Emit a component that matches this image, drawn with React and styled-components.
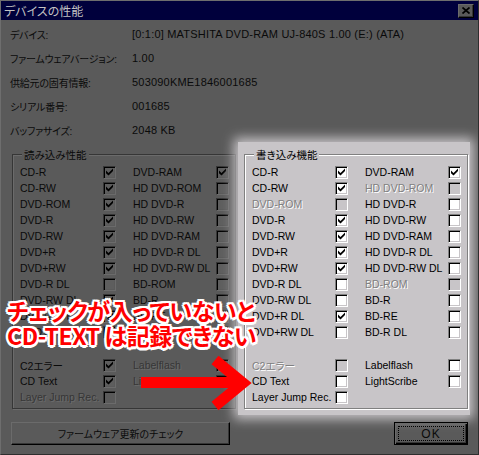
import styled, { createGlobalStyle } from 'styled-components'

const PAL = {
	dim: {
		bg: '#5a5a5a',
		text: '#0a0a0a',
		shade: '#363636',
		hi: '#6b6b6b',
		dark: '#000',
		fill: '#5e5e5e',
		dis: '#363636',
		disShadow: '#6b6b6b',
	},
	lit: {
		bg: '#c8c5c8',
		text: '#000',
		shade: '#808080',
		hi: '#fff',
		dark: '#000',
		fill: '#fff',
		dis: '#808080',
		disShadow: '#fff',
	},
}
const tone = (p) => (p.$lit ? PAL.lit : PAL.dim)

const GlobalStyle = createGlobalStyle`
	html, body {
		margin: 0;
		background: #5a5a5a;
	}
	body {
		font-family: "Liberation Sans", "Noto Sans CJK JP", sans-serif;
		font-size: 11px;
		font-feature-settings: "palt";
		color: #0a0a0a;
	}
`

const Dialog = styled.div`
	position: relative;
	width: 479px;
	height: 455px;
	box-sizing: border-box;
	display: flex;
	flex-direction: column;
	background: #5a5a5a;
	border-top: 1px solid #6e6e6e;
	border-left: 1px solid #6e6e6e;
	border-right: 1px solid #2e2e2e;
	border-bottom: 1px solid #2e2e2e;
	overflow: hidden;
`

const TitleBar = styled.div`
	height: 19px;
	flex-shrink: 0;
	display: flex;
	align-items: center;
	justify-content: space-between;
	padding: 0 4px 0 3px;
	background: #00003c;
`

const TitleText = styled.span`
	font-family: "Noto Sans CJK JP", sans-serif;
	font-size: 12px;
	color: #c2c2c2;
`

const CloseButton = styled.span`
	width: 16px;
	height: 14px;
	box-sizing: border-box;
	display: flex;
	align-items: center;
	justify-content: center;
	background: #5a5a5a;
	border: 1px solid;
	border-color: #6b6b6b #000 #000 #6b6b6b;
	box-shadow: inset -1px -1px 0 #363636;
`

const InfoList = styled.div`
	padding: 2px 0 0 9px;
`

const InfoRow = styled.div`
	display: grid;
	grid-template-columns: 122px 1fr;
	align-items: center;
	height: 24px;
	white-space: nowrap;
	letter-spacing: 0.2px;
`

const InfoLabel = styled.span`
	font-size: 10px;
	letter-spacing: -0.2px;
`

const GroupRow = styled.div`
	display: flex;
	gap: 8px;
	margin-top: 6px;
	padding-left: 11px;
	align-items: flex-start;
`

const Spotlight = styled.div`
	margin: -6px -2px -6px -6px;
	padding: 6px 2px 6px 6px;
	background: ${PAL.lit.bg};
	box-shadow: 0 0 11px 4px ${PAL.lit.bg};
`

const Group = styled.fieldset`
	width: 224px;
	box-sizing: border-box;
	margin: 0;
	padding: 3px 0 3px 7px;
	min-inline-size: 0;
	border: 1px solid ${(p) => tone(p).shade};
	box-shadow: inset 1px 1px 0 ${(p) => tone(p).hi}, 1px 1px 0 ${(p) => tone(p).hi};
	color: ${(p) => tone(p).text};
`

const Legend = styled.legend`
	margin-left: 2px;
	padding: 0 2px;
	line-height: 13px;
	background: ${(p) => tone(p).bg};
	font-family: "Noto Sans CJK JP", sans-serif;
	font-size: 10.5px;
`

const ItemGrid = styled.div`
	display: grid;
	grid-template-columns: repeat(2, 96px);
	grid-auto-rows: 16px;
	column-gap: 17px;
	align-items: center;
	margin-top: ${(p) => (p.$extra ? '17px' : '0')};
`

const Item = styled.div`
	display: flex;
	align-items: center;
`

const ItemLabel = styled.span`
	width: 83px;
	white-space: nowrap;
	font-size: 10.5px;
	color: ${(p) => (p.$disabled ? tone(p).dis : tone(p).text)};
	text-shadow: ${(p) => (p.$disabled ? `1px 1px 0 ${tone(p).disShadow}` : 'none')};
`

const Box = styled.span`
	width: 13px;
	height: 13px;
	box-sizing: border-box;
	display: flex;
	align-items: center;
	justify-content: center;
	border: 1px solid;
	border-color: ${(p) => `${tone(p).shade} ${tone(p).hi} ${tone(p).hi} ${tone(p).shade}`};
	box-shadow: inset 1px 1px 0 ${(p) => tone(p).dark}, inset -1px -1px 0 ${(p) => tone(p).bg};
	background: ${(p) => (p.$disabled ? tone(p).bg : tone(p).fill)};
`

const ButtonRow = styled.div`
	display: flex;
	justify-content: space-between;
	margin-top: 13px;
	padding: 0 10px;
`

const Button = styled.div`
	width: ${(p) => p.$width}px;
	height: 23px;
	box-sizing: border-box;
	display: flex;
	align-items: center;
	justify-content: center;
	padding: ${(p) => (p.$default ? '3px' : '0')};
	border: 1px solid;
	border-color: ${(p) => (p.$default ? '#000' : '#6b6b6b #000 #000 #6b6b6b')};
	box-shadow: ${(p) =>
		p.$default
			? 'inset 1px 1px 0 #6b6b6b, inset -1px -1px 0 #000, inset -2px -2px 0 #363636'
			: 'inset -1px -1px 0 #363636'};
	font-family: "Noto Sans CJK JP", sans-serif;
	font-size: 10px;
`

const Focus = styled.span`
	flex: 1;
	align-self: stretch;
	display: flex;
	align-items: center;
	justify-content: center;
	border: 1px dotted #000;
	font-family: "Liberation Sans", sans-serif;
	font-size: 12px;
	letter-spacing: 1px;
`

const Note = styled.div`
	position: absolute;
	left: 6px;
	top: 297px;
	font-family: "Noto Sans CJK JP", sans-serif;
	font-weight: 700;
	font-size: 23px;
	line-height: 25px;
	letter-spacing: -0.4px;
	color: #ff0000;
	white-space: nowrap;
	text-shadow: 2.5px 0 0 #fff, -2.5px 0 0 #fff, 0 2.5px 0 #fff, 0 -2.5px 0 #fff, 1.8px 1.8px 0 #fff,
		-1.8px 1.8px 0 #fff, 1.8px -1.8px 0 #fff, -1.8px -1.8px 0 #fff;
`

const NoteLine = styled.div``

const Arrow = styled.svg`
	position: absolute;
	left: 140px;
	top: 355px;
`

const MEDIA = [
	['CD-R', 'DVD-RAM'],
	['CD-RW', 'HD DVD-ROM'],
	['DVD-ROM', 'HD DVD-R'],
	['DVD-R', 'HD DVD-RW'],
	['DVD-RW', 'HD DVD-RAM'],
	['DVD+R', 'HD DVD-R DL'],
	['DVD+RW', 'HD DVD-RW DL'],
	['DVD-R DL', 'BD-ROM'],
	['DVD-RW DL', 'BD-R'],
	['DVD+R DL', 'BD-RE'],
	['DVD+RW DL', 'BD-R DL'],
].flat()

const EXTRA = ['C2エラー', 'Labelflash', 'CD Text', 'LightScribe', 'Layer Jump Rec.', null]

// x = checked, o = empty, - = disabled (row by row, left then right)
const READ = { media: 'xxxoxoxoxoxoxoooxoxooo', extra: 'x-x--' }
const WRITE = { media: 'xxx--oxoxoxoxoo-ooxooo', extra: '-oooo' }

const INFO = [
	['デバイス:', '[0:1:0] MATSHITA DVD-RAM UJ-840S 1.00 (E:) (ATA)'],
	['ファームウェアバージョン:', '1.00'],
	['供給元の固有情報:', '503090KME1846001685'],
	['シリアル番号:', '001685'],
	['バッファサイズ:', '2048 KB'],
]

function Check() {
	return (
		<svg width="7" height="8" viewBox="0 0 7 8">
			<polygon points="0,2.6 2.5,5 7,0.4 7,3 2.5,7.6 0,5.2" fill="#000" />
		</svg>
	)
}

function Option({ label, state, lit }) {
	if (!label) return <span />
	const disabled = state === '-'
	return (
		<Item>
			<ItemLabel $lit={lit} $disabled={disabled}>
				{label}
			</ItemLabel>
			<Box $lit={lit} $disabled={disabled}>
				{state === 'x' && <Check />}
			</Box>
		</Item>
	)
}

function Panel({ title, data, lit }) {
	return (
		<Group $lit={lit}>
			<Legend $lit={lit}>{title}</Legend>
			<ItemGrid>
				{MEDIA.map((m, i) => (
					<Option key={m} label={m} state={data.media[i]} lit={lit} />
				))}
			</ItemGrid>
			<ItemGrid $extra>
				{EXTRA.map((m, i) => (
					<Option key={i} label={m} state={data.extra[i]} lit={lit} />
				))}
			</ItemGrid>
		</Group>
	)
}

function App() {
	return (
		<>
			<GlobalStyle />
			<Dialog>
				<TitleBar>
					<TitleText>デバイスの性能</TitleText>
					<CloseButton>
						<svg width="8" height="7" viewBox="0 0 8 7">
							<path d="M0.5 0.5 L7.5 6.5 M7.5 0.5 L0.5 6.5" stroke="#000" strokeWidth="1.7" />
						</svg>
					</CloseButton>
				</TitleBar>

				<InfoList>
					{INFO.map(([k, v]) => (
						<InfoRow key={k}>
							<InfoLabel>{k}</InfoLabel>
							<span>{v}</span>
						</InfoRow>
					))}
				</InfoList>

				<GroupRow>
					<Panel title="読み込み性能" data={READ} />
					<Spotlight>
						<Panel title="書き込み機能" data={WRITE} lit />
					</Spotlight>
				</GroupRow>

				<ButtonRow>
					<Button $width={219}>ファームウェア更新のチェック</Button>
					<Button $width={74} $default>
						<Focus>OK</Focus>
					</Button>
				</ButtonRow>

				<Note>
					<NoteLine>チェックが入っていないと</NoteLine>
					<NoteLine>CD-TEXT は記録できない</NoteLine>
				</Note>
				<Arrow width="124" height="64" viewBox="0 0 124 64">
					<rect x="0" y="21" width="100" height="11" fill="#ff0000" />
					<polyline
						points="74,4 102,27 74,50"
						fill="none"
						stroke="#ff0000"
						strokeWidth="11"
						strokeLinejoin="miter"
					/>
				</Arrow>
			</Dialog>
		</>
	)
}

export default App
